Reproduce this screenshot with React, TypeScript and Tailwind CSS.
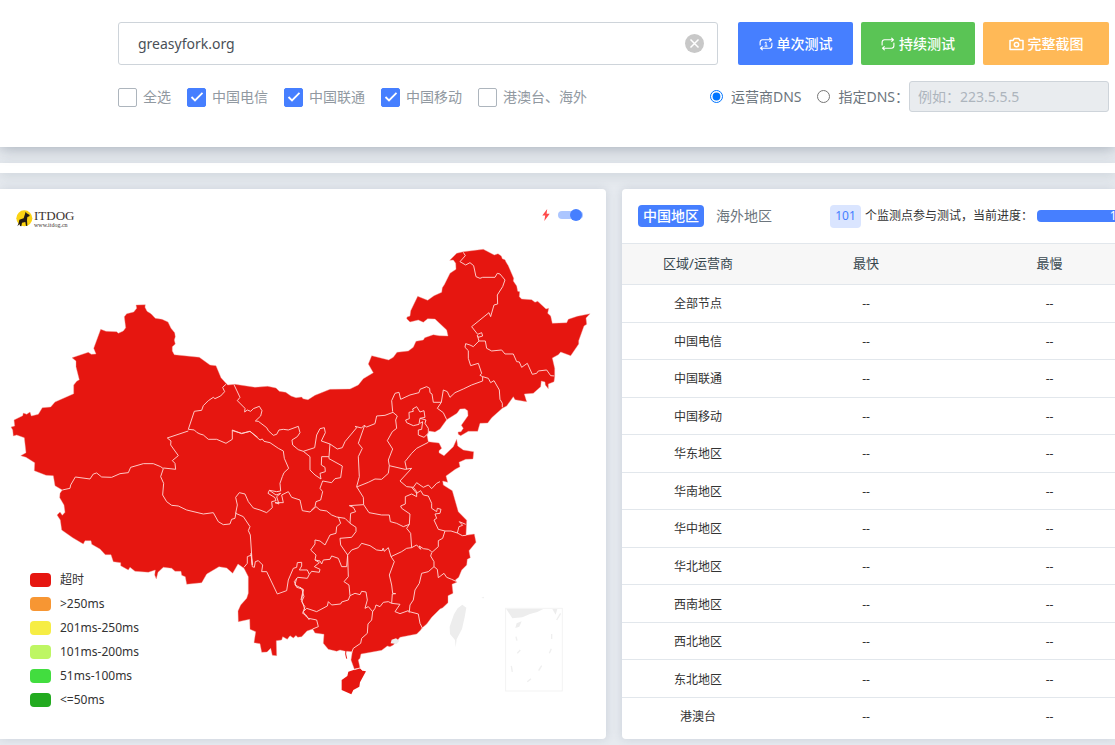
import { useState } from "react";
import clsx from "clsx";

const carriers = [
    { name: "全选", checked: false },
    { name: "中国电信", checked: true },
    { name: "中国联通", checked: true },
    { name: "中国移动", checked: true },
    { name: "港澳台、海外", checked: false },
];

const legend = [
    { label: "超时", color: "bg-[#e61610]" },
    { label: ">250ms", color: "bg-[#f79633]" },
    { label: "201ms-250ms", color: "bg-[#f6ed44]" },
    { label: "101ms-200ms", color: "bg-[#bef663]" },
    { label: "51ms-100ms", color: "bg-[#42dd3f]" },
    { label: "<=50ms", color: "bg-[#22aa1f]" },
];

const regions = [
    "全部节点",
    "中国电信",
    "中国联通",
    "中国移动",
    "华东地区",
    "华南地区",
    "华中地区",
    "华北地区",
    "西南地区",
    "西北地区",
    "东北地区",
    "港澳台",
];

const mainland =
    "11,427 14.7,426 14,420 22.7,415.7 23.3,413 26.7,414.3 30,412 31.3,416 38.3,414.3 42.3,407.7 50.7,407 55,402 73.7,393.7 73.7,385 76.7,381.3 79.3,379.7 76,366.7 76,361 72,357.7 88.3,352.3 91.3,354.3 96,354 93.7,348.3 100.7,329.3 106,331.3 116.7,331.7 118.3,333.3 123.3,331 125.7,327.7 124.3,316.7 126.7,313.7 133.7,312 136.7,308.3 136,305 145.3,304.7 145,307.3 147,311.3 151,313.7 155.3,318.3 162,319.3 168,322 171,328.3 174.7,332.7 175.3,336.7 174.3,340 175.3,344 172.3,346.7 172.3,351 174.3,354.7 199.3,357.3 210,365 216,365.7 221,377.7 226,383.3 227.7,385 235,384.3 255,387.3 267.7,386.3 276,388 279.3,391.3 285.7,392.3 291,396 296,397.7 301.7,397 303,398.7 308,399.7 315,395.3 330,389.3 350,389 358.3,385 363.3,378.7 373.3,372.7 368.3,364 371.7,355.7 388.7,360 393.3,357.3 397,352.3 408.3,351 413.3,347.3 416,341.3 423.3,340 424.7,337.7 433.3,334.7 439.3,335.7 448,336 446.7,330 435,319 427.7,318.7 423.3,322.3 418.3,320 410,322 406.7,318.7 407,317 410,316 410.7,310.7 417.7,296.3 427.7,300.3 434,295.7 441.7,292.3 442.3,287.7 444.3,284.7 450,273.3 456,269.3 455.7,263.3 453.3,260 449.7,260.3 456.7,253.3 463.3,251.7 483.3,249.3 494.3,255 498,253.7 501.3,256 502.3,258.7 505,259.7 506,262 508.3,265.7 513.7,278.3 513.3,281 516.7,286 517.7,291.3 519.7,291.7 519.3,296.7 521.7,299 531.7,299.7 535,302.3 537.7,301.3 546,309 548.7,308.3 547.7,313.3 550.7,316 552.3,323.3 566.7,322.7 568.3,319.3 577.3,316.3 590,313.7 586,318 586.7,324.3 584,326 578.7,340.7 578.7,344 570.7,355.7 560.7,352 558.3,354.7 552.3,358 554.7,368.3 554.7,376.7 554,381.7 548.3,384 548.3,388.7 545.3,385 545,382 541.3,381 540.7,386.7 533.3,393.3 524.3,394 526.7,401.7 515,399.7 513.3,396.7 506.7,406 502.3,408.3 491.7,417.7 487.7,423 480,423.3 477.7,431.3 468.3,431.3 460.7,435.7 458.3,434.3 458,432 461,431.7 463.3,428.3 461.3,425.3 468,415.7 467.7,410.7 465,408.7 460,409 457,413.3 446.7,419.7 440,429 435,432 429.3,431 427,435 428.3,441.7 439,443 441.7,448.3 439,450.7 439,452.7 444,455.7 453.3,446.7 456.7,439.3 457.7,446 463.3,450 467.7,450.7 473.7,451.7 473,459 465.7,459.3 459,462.3 460,466.7 455.3,469.3 446,476 447.7,482.3 442.7,481 443.3,485 452.3,490.7 458.3,511.7 466.7,520.3 466,535.3 474.3,534 476,542.3 469,550.7 470.3,557.7 467.3,559.3 466.7,565 461.7,570 458.7,577.3 455.3,580 456.7,582.3 452,584.3 453,593.3 448,595.7 448,602.7 442.7,607.7 440,609 431.7,617.3 426.7,624 422,628 420.7,630 416.7,634 400,637.3 398.3,639.3 393.3,645 390,646.7 387.3,646 381.7,650.3 361,654 360,658.3 358.3,660 360,668 354.3,669 351,660 352.3,651.7 344.3,651 340,650 336.7,651.3 328.3,649.3 323.3,643.3 324,634.3 315,633 312.7,629 307,631 301.7,636.7 297.7,637.3 296,635.5 293.3,638 290,635.7 287.3,639.3 282.7,636.7 281.7,640 276.3,640.7 276.7,655.7 272.3,655.3 270.7,648.3 267,652 261.7,652.3 260,643.7 254,642.7 255.7,631.7 250,629.3 249.7,619.3 238.3,621.7 238,611 240.7,605 246.7,598.3 248.3,593.3 248.3,576.7 244,568.3 238,564 232.7,573.3 226.7,568 219,566.7 206.7,574 201.7,582.7 186.7,584.3 185.3,576.7 181.7,575.3 181,571.3 175,571.3 171.7,568.3 163.3,567.3 158,572.3 156.3,579 154.7,575 155.3,570 148.3,572.3 135,571.3 130,567.3 128.3,570 120.7,565.7 120.7,562.7 113.3,561.7 111,554.7 105.3,554.7 100,549 91.7,544.3 91,540.7 85,540.7 83.3,544 72.7,537.7 61.7,530 60.3,520 57,515 60,512 62.3,515.3 65,512.3 64,505 59.7,497.7 60,493.3 62.3,490 55,485.7 53.3,475.7 46,475.3 34.3,470.7 34.7,462.7 26,457.3 20.7,455.7 26,452.7 24.3,437.7 16.7,435 13.3,436 12.7,430";

// Province borders, drawn at three times the map's scale and grouped by area
const borders = [
    {
        area: "northwest",
        transform: "translate(0 190) scale(.3333)",
        lines: [
            "678,583 668,592 674,605 662,618 645,626 640,622 625,632 610,647 605,661 583,664 565,718 583,720 590,727 600,732 610,735 625,748 650,748 678,760 697,748 697,720 725,731 750,724 773,742",
            "565,723 502,744 513,753 512,765 535,797 517,812 525,820 527,838 490,834",
        ],
    },
    {
        area: "northeast",
        transform: "translate(300 190) scale(.3333)",
        lines: [
            "490,187 496,197 480,215 497,225 510,218 521,227 528,260 540,265 548,262 585,262 592,250 600,252 615,270 608,290 592,315 593,342 582,345 572,380 567,368 515,410 533,433 545,428 548,438 535,442 532,436 537,453 556,453 560,475 575,483 605,480 615,492 640,492 650,515 658,516 665,532 682,520 697,553 710,550 715,543 740,540 752,557 763,558",
            "537,453 520,470 510,465 497,461 495,472 505,482 505,505 512,527 535,520 545,550 540,556 548,560 565,565 572,578 582,572 598,600 600,628 607,640 607,652",
            "548,560 548,573 515,585 490,597 465,608 450,622 442,605 430,600 424,637 412,655 430,668 440,689",
            "278,665 275,632 285,610 297,607 302,628 330,615 357,608 360,598 380,590 389,595 390,608 396,612 400,637 424,637",
        ],
    },
    {
        area: "tibet",
        transform: "translate(0 430) scale(.3333)",
        lines: [
            "187,180 210,175 212,165 226,141 270,147 280,132 290,129 305,141 335,142 360,131 385,128 392,112 430,101 460,101 482,110 490,116 482,140 491,160 488,195 500,215 515,226 535,228 560,240 610,252 640,248 655,275 670,284 690,282 695,268 705,265 708,248",
            "755,375 742,380 742,400 732,412",
            "890,445 885,465 905,475 912,500 905,515 915,530 908,550 918,555 928,570",
        ],
    },
    {
        area: "central",
        transform: "translate(220 380) scale(.3333)",
        lines: [
            "42,14 60,52 52,62 75,85 74,96 82,90 92,94 100,86 118,79 126,92 122,108 106,123 115,124 140,143 145,152 160,166 170,163 177,150 190,148 205,150 235,139 240,158 232,170 216,180 218,195 235,209 250,214 284,203 290,165 300,146 313,143 316,158 304,183 330,192 352,207 367,203 375,185 410,143 405,139 425,144 432,136 440,141 465,131 470,108 495,106 519,97",
            "434,136 415,190 427,205 415,230 418,290 410,320 430,352 431,374 447,398 485,405 508,405 511,425 530,430 550,440 568,433 570,402 545,385 542,378 556,372 556,350 575,342 590,350 590,335 580,322",
            "519,97 532,108 527,120 530,145 517,155 502,182 518,207 505,240 508,257 505,280 485,298 465,297 445,307 410,321",
            "508,257 555,268 575,265 540,303 560,320 580,322 590,308 610,322 625,315 635,326 650,310 660,305",
            "560,268 555,245 575,220 590,205 625,187",
            "590,80 600,96 612,92 615,112 600,115 597,133 580,137 560,128 557,120 568,116 567,97 580,94 578,87 590,80",
            "600,115 618,120 615,130 625,145 625,160 612,172 595,165 595,150 605,148 608,125 600,130",
            "37,152 65,160 90,154 120,180 127,177 132,184 150,188 175,205 190,213 193,235 206,265 192,278 187,290 180,310 182,333 170,335 148,331 144,340 165,353 168,362 155,365 157,383 140,398 120,390 100,384 85,365 75,342 58,338 47,352 52,375 47,400",
            "148,331 168,345 182,340 170,350 177,372 165,368 190,368 185,345 205,335 215,352 240,360 247,392 270,396 288,380 300,390 320,393 335,405 350,411 375,415 390,430",
            "250,214 270,230 270,270 285,285 303,297 300,280 316,275 315,262 304,255 305,230 327,230 330,192",
            "327,230 327,236 367,258 362,293 345,296 335,308 308,303 300,325 308,335 302,360 288,365 285,380 275,390",
            "390,430 392,400 407,395 400,382 388,377 431,374",
            "355,411 362,430 350,440 348,460 330,465 315,495 300,483 285,480 285,492 272,510 288,525 285,540 300,543 305,552 310,540 330,538 335,528 355,535 365,560 380,560 383,525 362,495 360,475 395,472 408,455 408,442 390,430",
            "47,400 70,410 90,440 85,452 91,465 97,555 93,520 97,560 103,562 106,545 115,542 128,555 125,575 140,575 172,642 200,632 205,600 220,565 230,562 232,548 245,547 245,558 238,570 262,570 268,583 275,574 298,577 300,568 283,560 298,548 285,540",
            "268,583 262,595 233,592 223,605 230,622 250,628 243,660",
            "383,525 395,510 415,503 425,490 450,497 470,510 486,512 490,505 493,514 505,503 513,530 545,515 560,505 575,503 572,460 560,445 568,433",
            "488,506 489,513",
            "575,503 590,495 602,508 598,498 610,506 625,508 635,515",
        ],
    },
    {
        area: "southeast",
        transform: "translate(300 430) scale(.3333)",
        lines: [
            "335,172 350,190 362,182 370,195 385,198 395,220 395,235 410,245 412,235 423,238 420,250 405,252 410,265 402,270 415,298 435,303 453,303 472,309",
            "435,303 428,325 415,332 415,350 395,368 392,378 402,395 402,410 412,418 415,443 432,430 440,442 455,448 470,455",
            "472,309 477,290 488,286 478,275 497,283",
            "472,309 487,317 498,316",
            "402,410 385,425 365,430 358,460 345,480 340,510 330,525 328,545 355,552 360,580 368,596",
            "273,380 283,395 278,408 268,435 275,465 278,490 287,491 277,492 275,520",
            "143,378 145,440 132,455 147,465 150,497 165,490 180,494 185,484 198,486 202,510 195,535 205,530 218,545 225,535 228,525 240,530 250,517 265,515 275,520 300,523 285,545 300,551 325,542 328,548",
            "150,497 145,510 125,516 122,522 95,525 85,515 82,528 50,545 20,535 10,545 15,556 25,565 50,570 55,590 38,597",
            "0,472 10,480 5,510 15,540",
            "218,545 215,570 204,582 202,610 185,625 182,640 160,655 155,668",
        ],
    },
];

function ChinaMap() {
    return (
        <svg viewBox="0 236 606 503" className="block w-full" role="img" aria-label="中国地区">
            <polygon points={mainland} fill="#e61610" stroke="#f3a39f" strokeWidth=".4" />
            <g transform="translate(300 430) scale(.3333)">
                <polygon points="163,719 180,714 188,722 198,724 180,757 178,770 160,780 154,793 125,780 125,750 142,738 145,725" fill="#e61610" />
                <path d="M138 660 137 672 140 686" fill="none" stroke="#e61610" strokeWidth="3" />
                <path d="M163 719 180 714 188 722" fill="none" stroke="#ffd5d3" strokeWidth="3" />
                <path d="M272 640 275 629 288 625 298 632 290 642Z" fill="#ededed" />
                <path d="M487 524 499 533 494 562 486 597 470 628 467 652 465 630 450 612 449 590 462 553 473 535Z" fill="#ededed" />
                <path d="M544 504 551 500 552 505Z" fill="#ededed" />
                <rect x="617" y="535" width="170" height="248" fill="none" stroke="#f3f3f3" strokeWidth="3" />
                <path d="M619 537H730L712 546 690 552 667 562 637 565Z" fill="#ededed" />
                <path d="M757 537H772L767 554Z" fill="#ededed" />
                <path d="M650 580 665 574 658 590 646 594Z" fill="#ededed" />
                <path
                    d="M782 550 770 570M755 612V627M754 656 748 670M725 707 716 722M693 746 682 755M661 660 652 670M648 620 651 632M634 708 637 726"
                    fill="none"
                    stroke="#efefef"
                    strokeWidth="4"
                />
            </g>
            {borders.map((group) => (
                <g key={group.area} transform={group.transform} fill="none" stroke="#ffd5d3" strokeWidth="2.8" strokeLinejoin="round">
                    {group.lines.map((points) => (
                        <polyline key={points} points={points} />
                    ))}
                </g>
            ))}
        </svg>
    );
}

function Logo() {
    return (
        <div className="flex items-center gap-px">
            <svg width="17" height="18" viewBox="0 0 51 54">
                <circle cx="25" cy="25" r="24" fill="#fbd313" />
                <path
                    d="M27 12 29 5 32 10 41 15 40 19 34 21 33 31 34 47 30 48 28 36 18 38 16 49 12 48 11 42 4 49 8 39 10 29 23 25Z"
                    fill="#231b14"
                />
            </svg>
            <div className="flex flex-col font-['Liberation_Serif',serif] text-[#3b3331]">
                <span className="text-[13px] leading-[13px]">ITDOG</span>
                <span className="text-[6px] leading-[7px]">www.itdog.cn</span>
            </div>
        </div>
    );
}

function RepeatIcon({ once = false }: { once?: boolean }) {
    return (
        <svg width="14" height="14" viewBox="0 0 15 14" fill="none" stroke="currentColor" strokeWidth="1.2" strokeLinecap="round" strokeLinejoin="round">
            <path d="M1.2 8V5a2.5 2.5 0 0 1 2.5-2.5h9.6M11.5 .8l1.9 1.7-1.9 1.7" />
            <path d="M13.8 6v3a2.5 2.5 0 0 1-2.5 2.5H1.7M3.5 9.8l-1.9 1.7 1.9 1.7" />
            {once && <path d="M6.4 5.6l1.2-.7v4.4M6.4 9.3h2.4" strokeWidth="1" />}
        </svg>
    );
}

function CameraIcon() {
    return (
        <svg width="15" height="14" viewBox="0 0 15 14" fill="none" stroke="currentColor" strokeWidth="1.5" strokeLinejoin="round">
            <path d="M1 3.6h3l1.2-2.1h4.6L11 3.6h3v8.9H1z" />
            <circle cx="7.5" cy="7.6" r="2.2" />
        </svg>
    );
}

function Checkbox({ name, defaultChecked }: { name: string; defaultChecked: boolean }) {
    return (
        <label className="flex items-center gap-[6px] text-sm text-[#9199a1]">
            <span className="grid place-items-center">
                <input
                    type="checkbox"
                    defaultChecked={defaultChecked}
                    className="peer col-start-1 row-start-1 size-[19px] appearance-none rounded-xs border border-[#adb5bd] bg-white checked:border-[#467fff] checked:bg-[#467fff]"
                />
                <svg viewBox="0 0 14 12" className="pointer-events-none col-start-1 row-start-1 hidden h-3 w-3.5 peer-checked:block" fill="none" stroke="#fff" strokeWidth="1.8">
                    <path d="M1.5 6 5 9.5 12.5 1.8" />
                </svg>
            </span>
            {name}
        </label>
    );
}

export default function App() {
    const [host, setHost] = useState("greasyfork.org");
    const [dns, setDns] = useState("isp");
    const [tab, setTab] = useState("中国地区");

    return (
        <div className="min-h-screen overflow-hidden bg-[#e6eaef] font-['Noto_Sans','Noto_Sans_CJK_SC',sans-serif] text-[#333]">
            <header className="relative bg-white pt-[22px] pr-[6px] pb-[35px] pl-[118px] shadow-[0_2px_14px_rgba(60,75,95,0.36)]">
                <div className="flex gap-5">
                    <div className="flex h-[43px] flex-1 items-center rounded-[3px] border border-[#ced4da] pr-[13px] pl-[19px]">
                        <input
                            aria-label="域名"
                            value={host}
                            onChange={(e) => setHost(e.target.value)}
                            className="min-w-0 flex-1 text-sm text-[#495057] outline-none"
                        />
                        <button type="button" aria-label="清空" onClick={() => setHost("")}>
                            <svg width="19" height="19" viewBox="0 0 19 19">
                                <circle cx="9.5" cy="9.5" r="9.5" fill="#c8c8c8" />
                                <path d="M5.5 5.5l8 8M13.5 5.5l-8 8" stroke="#fff" strokeWidth="1.5" />
                            </svg>
                        </button>
                    </div>
                    <div className="flex gap-2 text-sm font-medium text-white">
                        <button type="button" className="flex w-[115px] items-center justify-center gap-1 rounded-xs bg-[#467fff]">
                            <RepeatIcon once />
                            单次测试
                        </button>
                        <button type="button" className="flex w-[114px] items-center justify-center gap-1 rounded-xs bg-[#5ac455]">
                            <RepeatIcon />
                            持续测试
                        </button>
                        <button type="button" className="flex w-[126px] items-center justify-center gap-1 rounded-xs bg-[#ffb957]">
                            <CameraIcon />
                            完整截图
                        </button>
                    </div>
                </div>

                <div className="mt-4 flex items-center justify-between">
                    <div className="flex items-center gap-4 pt-px">
                        {carriers.map((c) => (
                            <Checkbox key={c.name} name={c.name} defaultChecked={c.checked} />
                        ))}
                    </div>
                    <div className="flex items-center text-sm text-[#6c757d]">
                        <label className="mr-4 flex items-center gap-2">
                            <input type="radio" name="dns" checked={dns === "isp"} onChange={() => setDns("isp")} className="size-[13px]" />
                            运营商DNS
                        </label>
                        <label className="flex items-center gap-2">
                            <input type="radio" name="dns" checked={dns === "custom"} onChange={() => setDns("custom")} className="size-[13px]" />
                            指定DNS：
                        </label>
                        <input
                            aria-label="DNS"
                            disabled={dns === "isp"}
                            placeholder="例如：223.5.5.5"
                            className="h-[31px] w-[200px] rounded-[3px] border border-[#ced4da] bg-[#e9ecef] px-2 placeholder:text-[#adb5bd]"
                        />
                    </div>
                </div>
            </header>

            <div className="mt-4 h-[10px] bg-white shadow-[0_3px_12px_rgba(60,75,95,0.14)]" />

            <main className="mt-4 grid grid-cols-[minmax(0,606fr)_minmax(0,493fr)] gap-4 pb-[6px]">
                <section className="relative rounded-r-[4px] bg-white shadow-[0_0_10px_rgba(60,80,110,0.16)]">
                    <div className="flex h-[47px] items-center justify-between px-4 pt-3 pr-[23px]">
                        <Logo />
                        <label className="mb-2 flex items-center gap-2">
                            <svg width="8" height="12" viewBox="0 0 8 12" aria-hidden="true">
                                <path d="M5.2 0 .3 6.6h2.9L2.3 12 7.7 4.8H4.6z" fill="#ff4b4b" />
                            </svg>
                            <input
                                type="checkbox"
                                role="switch"
                                aria-label="加速"
                                defaultChecked
                                className="relative h-2 w-[25px] appearance-none rounded-full bg-gray-300 before:absolute before:-top-[2px] before:left-0 before:size-3 before:rounded-full before:bg-white checked:bg-[#acc6ff] checked:before:left-3 checked:before:bg-[#467fff]"
                            />
                        </label>
                    </div>
                    <ChinaMap />
                    <ul className="absolute bottom-[27px] left-[30px] text-xs">
                        {legend.map((item) => (
                            <li key={item.label} className="flex h-6 items-center gap-[9px]">
                                <span className={clsx("h-[14px] w-[21px] rounded-[4px]", item.color)} />
                                {item.label}
                            </li>
                        ))}
                    </ul>
                </section>

                <section className="overflow-hidden rounded-l-[4px] bg-white shadow-[0_0_10px_rgba(60,80,110,0.16)]">
                    <div className="flex h-[54px] min-w-[607px] items-center px-4">
                        <div className="flex gap-2 text-sm">
                            {["中国地区", "海外地区"].map((name) => (
                                <button
                                    key={name}
                                    type="button"
                                    onClick={() => setTab(name)}
                                    className={clsx(
                                        "h-[22px] rounded-[4px]",
                                        tab === name ? "bg-[#467fff] px-[5px] font-medium text-white" : "px-1 text-[#6c757d]"
                                    )}
                                >
                                    {name}
                                </button>
                            ))}
                        </div>
                        <div className="ml-[54px] flex flex-1 items-center gap-1 text-xs">
                            <span className="flex h-[23px] w-[31px] items-center justify-center rounded-[4px] bg-[#dae5ff] text-[#467fff]">101</span>
                            <span>个监测点参与测试，当前进度：</span>
                            <div className="flex h-3 flex-1 items-center justify-center rounded-[4px] bg-[#467fff] text-xs text-white">100%</div>
                        </div>
                    </div>
                    <table className="h-[491px] w-full min-w-[519px] table-fixed border-collapse text-center text-xs">
                        <thead>
                            <tr className="h-[41px] border-y border-[#e2e7ec] bg-[#f7f7f7] text-[13px] text-[#37474f]">
                                <th className="w-[152px] font-normal">区域/运营商</th>
                                <th className="w-[184px] font-normal">最快</th>
                                <th className="font-normal">最慢</th>
                            </tr>
                        </thead>
                        <tbody>
                            {regions.map((region) => (
                                <tr key={region} className="border-b border-[#e2e7ec] last:border-0">
                                    <td className="pt-0.5">{region}</td>
                                    <td className="pt-0.5">--</td>
                                    <td className="pt-0.5">--</td>
                                </tr>
                            ))}
                        </tbody>
                    </table>
                </section>
            </main>
        </div>
    );
}
